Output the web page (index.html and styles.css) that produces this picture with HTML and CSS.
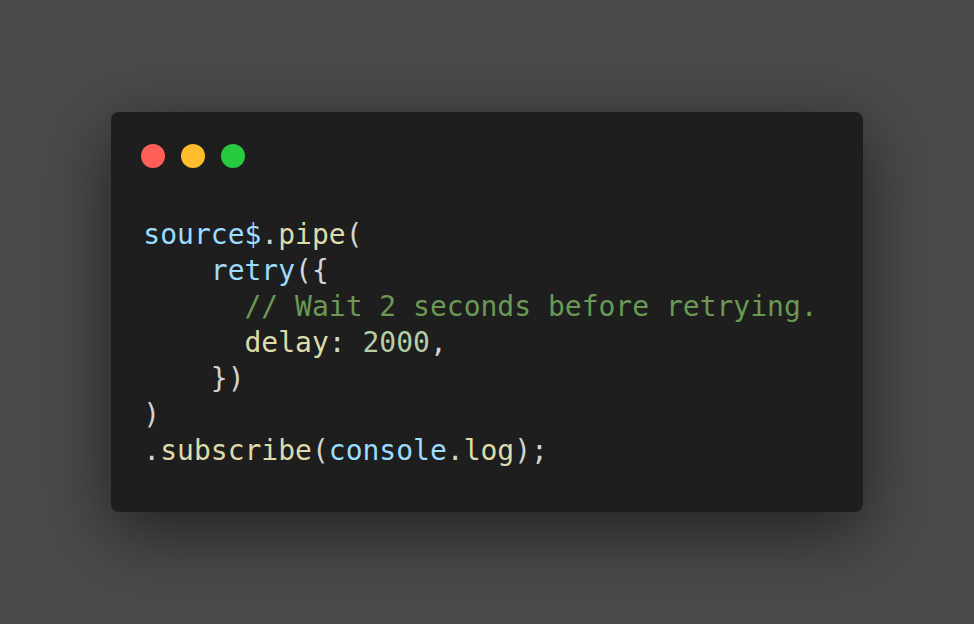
FILE: index.html
```html
<!DOCTYPE html>
<html>
<head>
<meta charset="utf-8">
<link rel="stylesheet" href="styles.css">
</head>
<body>
<div class="stage">
  <div class="window">
    <div class="dots">
      <span class="dot red"></span>
      <span class="dot yellow"></span>
      <span class="dot green"></span>
    </div>
    <pre class="code"><span class="var">source$</span><span class="pun">.</span><span class="fn">pipe</span><span class="pun">(</span>
    <span class="var">retry</span><span class="pun">({</span>
      <span class="cmt">// Wait 2 seconds before retrying.</span>
      <span class="fn">delay</span><span class="pun">:</span> <span class="num">2000</span><span class="pun">,</span>
    <span class="pun">})</span>
<span class="pun">)</span>
<span class="pun">.</span><span class="fn">subscribe</span><span class="pun">(</span><span class="var">console</span><span class="pun">.</span><span class="fn">log</span><span class="pun">);</span></pre>
  </div>
</div>
</body>
</html>
```
FILE: styles.css
```css
html, body {
  margin: 0;
  padding: 0;
  background: #4a4a4a;
}
.stage {
  height: 624px;
  display: flex;
  align-items: center;
  justify-content: center;
}
.window {
  background: #1e1e1e;
  border-radius: 8px;
  padding: 32px 45px 43px 32px;
  box-shadow: 0 20px 70px rgba(0, 0, 0, 0.55);
}
.dots {
  display: flex;
  gap: 16px;
  margin-left: -2px;
  height: 24px;
}
.dot {
  width: 24px;
  height: 24px;
  border-radius: 50%;
}
.red { background: #ff5f56; }
.yellow { background: #ffbd2e; }
.green { background: #27c93f; }
.code {
  margin: 49px 0 0 0;
  font-family: "DejaVu Sans Mono", monospace;
  font-size: 28px;
  line-height: 36px;
  color: #d4d4d4;
}
.var { color: #9cdcfe; }
.fn { color: #dcdcaa; }
.pun { color: #d4d4d4; }
.cmt { color: #6a9955; }
.num { color: #b5cea8; }
```
